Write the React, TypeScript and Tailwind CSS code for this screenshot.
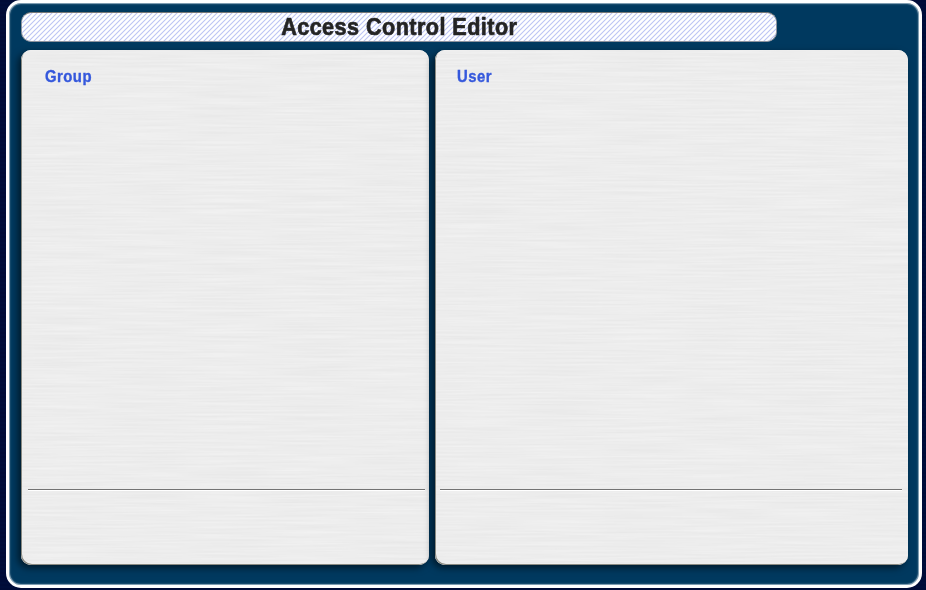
function BrushedTexture({ id, seed }: { id: string; seed: number }) {
  return (
    <svg className="pointer-events-none absolute inset-0 h-full w-full rounded-[10px]" aria-hidden="true">
      <filter id={id} x="0" y="0" width="100%" height="100%" colorInterpolationFilters="sRGB">
        <feTurbulence type="fractalNoise" baseFrequency="0.012 0.5" numOctaves={2} seed={seed} />
        <feColorMatrix values="0.05 0 0 0 0.903  0.05 0 0 0 0.903  0.05 0 0 0 0.903  0 0 0 0 1" />
      </filter>
      <rect width="100%" height="100%" filter={`url(#${id})`} />
    </svg>
  );
}

function HatchPattern() {
  return (
    <svg className="pointer-events-none absolute inset-0 h-full w-full rounded-[9px]" aria-hidden="true">
      <defs>
        <pattern id="hatch" width="5" height="5" patternUnits="userSpaceOnUse">
          <path d="M-1 6 6 -1M-1 1 1 -1M4 6 6 4" stroke="#bcc4f4" strokeWidth="1.1" />
        </pattern>
      </defs>
      <rect width="100%" height="100%" fill="url(#hatch)" />
    </svg>
  );
}

function Panel({ title, id, seed, className }: { title: string; id: string; seed: number; className: string }) {
  return (
    <section className={`relative h-[515px] rounded-[10px] bg-[#ededed] shadow-[-3px_3px_7px_rgba(0,0,0,0.55)] ${className}`}>
      <BrushedTexture id={id} seed={seed} />
      <div className="pointer-events-none absolute inset-0 rounded-[10px] shadow-[inset_1px_-1px_0_#8a8a82]" />
      <h2 className="relative h-[439px] pt-[17px] text-[16px] leading-[20px] font-bold text-[#3558dc] [-webkit-text-stroke:0.35px_#3558dc]">
        <span className="inline-block origin-left scale-x-[0.93] tracking-[0.5px]">{title}</span>
      </h2>
      <div className="relative h-[2px] border-t border-b border-t-[#737373] border-b-white" />
    </section>
  );
}

export default function App() {
  return (
    <main className="h-[590px] w-[926px] overflow-hidden bg-[#000b37] bg-[repeating-linear-gradient(0deg,#000b37_0px,#000b37_2px,#000f3d_3px,#000b37_4px)] pl-[6px] font-['Liberation_Sans',Arial,sans-serif]">
      <div className="h-[588px] w-[916px] rounded-[15px] border-[3px] border-white bg-[#00395f] pt-[9px] pl-[12px] shadow-[inset_0_0_0_1px_#7e9db2,inset_0_0_2px_1px_#52768f]">
        <header className="relative flex h-[30px] w-[756px] items-center justify-center rounded-[10px] border border-[#8c929d] border-t-[#777] bg-white">
          <HatchPattern />
          <h1 className="relative scale-x-[0.9] text-[24px] leading-[28px] font-bold tracking-[0.5px] whitespace-nowrap text-[#242424] [-webkit-text-stroke:0.7px_#242424]">Access Control Editor</h1>
        </header>
        <div className="mt-[8px] flex gap-[6px]">
          <Panel title="Group" id="brush-group" seed={4} className="w-[408px] pr-[4px] pl-[7px] [&_h2]:pl-[17px]" />
          <Panel title="User" id="brush-user" seed={11} className="w-[473px] pr-[6px] pl-[5px] [&_h2]:pl-[17px]" />
        </div>
      </div>
    </main>
  );
}
